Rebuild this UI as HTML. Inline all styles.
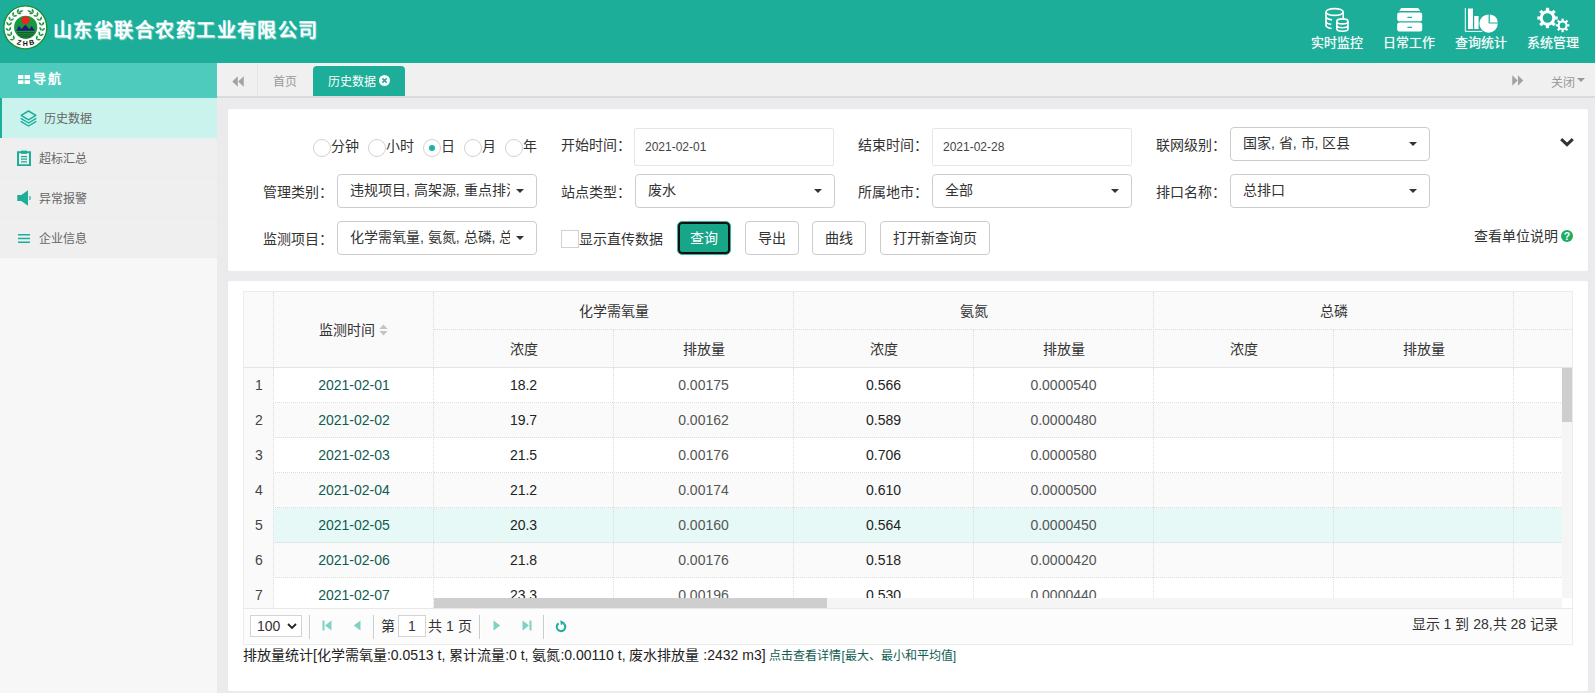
<!DOCTYPE html>
<html lang="zh-CN">
<head>
<meta charset="utf-8">
<title>历史数据</title>
<style>
*{box-sizing:border-box;margin:0;padding:0}
html,body{width:1595px;height:693px;overflow:hidden}
body{font-family:"Liberation Sans",sans-serif;font-size:14px;color:#333;background:#ebebed;position:relative}
.abs{position:absolute}
/* header */
#hdr{position:absolute;left:0;top:0;width:1595px;height:63px;background:#1cae99}
#title{position:absolute;left:53px;top:16px;height:30px;line-height:30px;font-family:"Liberation Serif",serif;font-weight:bold;font-size:19px;color:#fff;white-space:nowrap;letter-spacing:1.45px;text-shadow:1px 1px 1px rgba(255,255,255,.55)}
.topnav{position:absolute;top:0;height:63px;width:72px;color:#fff;text-align:center}
.topnav svg{position:absolute;left:0;top:0}
.topnav span{position:absolute;left:-10px;right:-10px;top:35px;height:16px;line-height:16px;font-size:13px;white-space:nowrap;text-shadow:0 0 1px rgba(255,255,255,.6)}
/* sidebar */
#side{position:absolute;left:0;top:63px;width:217px;height:630px;background:#f7f7f7}
#navh{position:absolute;left:0;top:0;width:217px;height:35px;background:#4ecbbc}
#navh span{position:absolute;left:33px;top:7px;line-height:18px;font-size:13px;font-weight:bold;color:#fff;letter-spacing:1.5px}
.mi{position:absolute;left:0;width:217px;height:40px;background:#efefef;border-bottom:1px solid #ebebeb;color:#666;font-size:12px}
.mi span{position:absolute;left:39px;top:13px;line-height:16px;white-space:nowrap}
.mi.act{background:#c9f3ec;border-left:2px solid #1cae99;border-bottom:none}
.mi.act span{left:42px}
/* tabs */
#tabs{position:absolute;left:217px;top:63px;width:1378px;height:35px;background:#f0f0f0;border-bottom:2px solid #dadada}
#tabs .t{position:absolute;top:0;height:33px;line-height:38px;font-size:12px;color:#999;white-space:nowrap}
#tabact{position:absolute;left:96px;top:3px;width:92px;height:30px;background:#1cae99;border-radius:4px 4px 0 0;color:#fff;font-size:12px;line-height:33px}
/* panels */
.panel{position:absolute;background:#fff;border-radius:2px}
.lbl{position:absolute;height:20px;line-height:20px;font-size:14px;color:#333;white-space:nowrap;text-align:right}
.sel{position:absolute;width:200px;height:34px;border:1px solid #ccc;border-radius:4px;background:#fff;font-size:14px;color:#333;line-height:31px;padding-left:12px;white-space:nowrap;overflow:hidden}
.sel i{position:absolute;right:12px;top:14px;width:0;height:0;border-left:4px solid transparent;border-right:4px solid transparent;border-top:4px solid #333}
.sel b{font-weight:normal;display:block;width:160px;overflow:hidden}
.dt{position:absolute;width:200px;height:38px;border:1px solid #e5e6e7;border-radius:2px;background:#fff;font-size:12px;color:#444;line-height:37px;padding-left:10px}
.btn{position:absolute;top:112px;height:34px;border:1px solid #ccc;border-radius:4px;background:#fff;font-size:14px;color:#333;line-height:32px;text-align:center;white-space:nowrap}
.rad{position:absolute;top:30px;width:18px;height:18px;border:1px solid #d2d2d2;border-radius:50%;background:#fff}
.rl{position:absolute;top:27px;height:20px;line-height:20px;font-size:14px;color:#333;white-space:nowrap}
/* table */
.cell{position:absolute;font-size:14px;color:#333;text-align:center;white-space:nowrap;overflow:hidden}
.hl{position:absolute;height:0;border-top:1px dotted #dcdcdc}
.vl{position:absolute;width:0;border-left:1px dotted #dcdcdc}
.row{position:absolute;left:0;width:1319px;height:35px}
.row span{position:absolute;top:0;height:35px;line-height:34px;text-align:center;font-size:14px;color:#333}
.row .n{left:0;width:30px;background:#fafafa;color:#444;text-align:center}
.row .d{left:30px;width:160px;color:#0f5c52}
.pg{position:absolute;font-size:14px;color:#333;line-height:20px;white-space:nowrap}
.sep{position:absolute;top:6px;width:0;height:24px;border-left:1px solid #ccc;border-right:1px solid #fff}
</style>
</head>
<body>
<div id="hdr">
<svg class="abs" style="left:2px;top:4px" width="48" height="48" viewBox="0 0 48 48">
<circle cx="23.3" cy="23.4" r="21.500" fill="#fff" stroke="#1d8f35" stroke-width="1.400"/>
<circle cx="23.7" cy="23.299999999999997" r="11.600" fill="#169a3e"/>
<circle cx="23.5" cy="16.299999999999997" r="4.100" fill="#e8281e"/>
<path d="M14.299999999999999 26.799999999999997 L17.0 21.799999999999997 L19.299999999999997 25.0 L23.4 20.799999999999997 L27.3 25.2 L29.7 22.0 L32.9 26.799999999999997 Z" fill="#2a157a"/>
<path d="M15.1 27.9h17.200v1.300h-17.200z M16.299999999999997 30.2h14.800v1.200h-14.800z M18.7 32.3h10v1.100h-10z" fill="#1b5a2a"/>
<g fill="#1e9440">
<path transform="translate(12.19 35.74) rotate(-176.0)" d="M0 0 Q2.30 -1.90 4.60 0 Q2.30 1.90 0 0Z"/>
<path transform="translate(12.19 35.74) rotate(-100.0)" d="M0 0 Q2.30 -1.90 4.60 0 Q2.30 1.90 0 0Z"/>
<path transform="translate(8.92 31.70) rotate(-158.0)" d="M0 0 Q2.30 -1.90 4.60 0 Q2.30 1.90 0 0Z"/>
<path transform="translate(8.92 31.70) rotate(-82.0)" d="M0 0 Q2.30 -1.90 4.60 0 Q2.30 1.90 0 0Z"/>
<path transform="translate(7.06 26.85) rotate(-140.0)" d="M0 0 Q2.30 -1.90 4.60 0 Q2.30 1.90 0 0Z"/>
<path transform="translate(7.06 26.85) rotate(-64.0)" d="M0 0 Q2.30 -1.90 4.60 0 Q2.30 1.90 0 0Z"/>
<path transform="translate(6.79 21.66) rotate(-122.0)" d="M0 0 Q2.30 -1.90 4.60 0 Q2.30 1.90 0 0Z"/>
<path transform="translate(6.79 21.66) rotate(-46.0)" d="M0 0 Q2.30 -1.90 4.60 0 Q2.30 1.90 0 0Z"/>
<path transform="translate(8.14 16.65) rotate(-104.0)" d="M0 0 Q2.30 -1.90 4.60 0 Q2.30 1.90 0 0Z"/>
<path transform="translate(8.14 16.65) rotate(-28.0)" d="M0 0 Q2.30 -1.90 4.60 0 Q2.30 1.90 0 0Z"/>
<path transform="translate(10.96 12.29) rotate(-86.0)" d="M0 0 Q2.30 -1.90 4.60 0 Q2.30 1.90 0 0Z"/>
<path transform="translate(10.96 12.29) rotate(-10.0)" d="M0 0 Q2.30 -1.90 4.60 0 Q2.30 1.90 0 0Z"/>
<path transform="translate(15.00 9.02) rotate(-68.0)" d="M0 0 Q2.30 -1.90 4.60 0 Q2.30 1.90 0 0Z"/>
<path transform="translate(15.00 9.02) rotate(8.0)" d="M0 0 Q2.30 -1.90 4.60 0 Q2.30 1.90 0 0Z"/>
<path transform="translate(16.55 8.24) rotate(-20.0)" d="M0 0 Q2.60 -1.80 5.20 0 Q2.60 1.80 0 0Z"/>
<path transform="translate(34.41 35.74) rotate(-4.0)" d="M0 0 Q2.30 -1.90 4.60 0 Q2.30 1.90 0 0Z"/>
<path transform="translate(34.41 35.74) rotate(-80.0)" d="M0 0 Q2.30 -1.90 4.60 0 Q2.30 1.90 0 0Z"/>
<path transform="translate(37.68 31.70) rotate(-22.0)" d="M0 0 Q2.30 -1.90 4.60 0 Q2.30 1.90 0 0Z"/>
<path transform="translate(37.68 31.70) rotate(-98.0)" d="M0 0 Q2.30 -1.90 4.60 0 Q2.30 1.90 0 0Z"/>
<path transform="translate(39.54 26.85) rotate(-40.0)" d="M0 0 Q2.30 -1.90 4.60 0 Q2.30 1.90 0 0Z"/>
<path transform="translate(39.54 26.85) rotate(-116.0)" d="M0 0 Q2.30 -1.90 4.60 0 Q2.30 1.90 0 0Z"/>
<path transform="translate(39.81 21.66) rotate(-58.0)" d="M0 0 Q2.30 -1.90 4.60 0 Q2.30 1.90 0 0Z"/>
<path transform="translate(39.81 21.66) rotate(-134.0)" d="M0 0 Q2.30 -1.90 4.60 0 Q2.30 1.90 0 0Z"/>
<path transform="translate(38.46 16.65) rotate(-76.0)" d="M0 0 Q2.30 -1.90 4.60 0 Q2.30 1.90 0 0Z"/>
<path transform="translate(38.46 16.65) rotate(-152.0)" d="M0 0 Q2.30 -1.90 4.60 0 Q2.30 1.90 0 0Z"/>
<path transform="translate(35.64 12.29) rotate(-94.0)" d="M0 0 Q2.30 -1.90 4.60 0 Q2.30 1.90 0 0Z"/>
<path transform="translate(35.64 12.29) rotate(-170.0)" d="M0 0 Q2.30 -1.90 4.60 0 Q2.30 1.90 0 0Z"/>
<path transform="translate(31.60 9.02) rotate(-112.0)" d="M0 0 Q2.30 -1.90 4.60 0 Q2.30 1.90 0 0Z"/>
<path transform="translate(31.60 9.02) rotate(-188.0)" d="M0 0 Q2.30 -1.90 4.60 0 Q2.30 1.90 0 0Z"/>
<path transform="translate(30.05 8.24) rotate(200.0)" d="M0 0 Q2.60 -1.80 5.20 0 Q2.60 1.80 0 0Z"/>
</g>
<text transform="translate(16.50 40.70) rotate(14)" font-size="7" font-weight="bold" fill="#111" text-anchor="middle" font-family="Liberation Sans">Z</text>
<text transform="translate(23.30 41.80) rotate(0)" font-size="7" font-weight="bold" fill="#111" text-anchor="middle" font-family="Liberation Sans">H</text>
<text transform="translate(30.10 40.70) rotate(-14)" font-size="7" font-weight="bold" fill="#111" text-anchor="middle" font-family="Liberation Sans">B</text>
</svg>

<div id="title">山东省联合农药工业有限公司</div>
<div class="topnav" style="left:1301px"><svg width="72" height="36" viewBox="0 0 72 36"><g fill="none" stroke="#fff" stroke-width="1.6">
<ellipse cx="33.600" cy="12" rx="8.600" ry="3.400"/><path d="M25 12v13.200c0 1.600 2.400 2.800 5.600 3.300M42.200 12v6M25 16.600c0 1.600 2.600 2.900 6 3.300M25 21.200c0 1.500 2.300 2.700 5.200 3.200"/>
<ellipse cx="41.400" cy="21.400" rx="5.600" ry="2.500"/><path d="M35.800 21.400v7.400c0 1.400 2.500 2.500 5.600 2.500s5.600-1.100 5.600-2.500v-7.400M35.800 25.200c0 1.400 2.500 2.500 5.600 2.500s5.600-1.100 5.600-2.500"/></g></svg><span>实时监控</span></div>
<div class="topnav" style="left:1373px"><svg width="72" height="36" viewBox="0 0 72 36"><path d="M28.200 8h17l2 3H26.200z M26.200 12.400h21q2 0 2 2v4.800q0 2-2 2H26.200q-2 0-2-2v-4.800q0-2 2-2z M26.200 22.600h21q2 0 2 2v4.800q0 2-2 2H26.200q-2 0-2-2v-4.800q0-2 2-2z" fill="#fff"/><path d="M34.900 17.400h3.600M34.900 27.400h3.600" stroke="#1cae99" stroke-width="1.200" stroke-linecap="round"/></svg><span>日常工作</span></div>
<div class="topnav" style="left:1445px"><svg width="72" height="36" viewBox="0 0 72 36"><path d="M20.300 8v23.400h17" fill="none" stroke="#fff" stroke-width="1"/><path d="M23 8.400h5v20.600h-5z M29.200 16h4.400v13h-4.400z" fill="#fff"/><path d="M43.600 14.400v9.200h9.200a9.200 9.200 0 1 1-9.200-9.200z" fill="#fff"/><path d="M44.800 14.400a8.200 8.200 0 0 1 8 8h-8z" fill="#fff"/></svg><span>查询统计</span></div>
<div class="topnav" style="left:1517px"><svg width="72" height="36" viewBox="0 0 72 36">
<g transform="translate(30.500 18)"><circle r="6.300" fill="none" stroke="#fff" stroke-width="3"/><g fill="#fff"><path transform="rotate(0)" d="M-1.600-10.200h3.200v3.400h-3.200z"/><path transform="rotate(45)" d="M-1.600-10.200h3.200v3.400h-3.200z"/><path transform="rotate(90)" d="M-1.600-10.200h3.200v3.400h-3.200z"/><path transform="rotate(135)" d="M-1.600-10.200h3.200v3.400h-3.200z"/><path transform="rotate(180)" d="M-1.600-10.200h3.200v3.400h-3.200z"/><path transform="rotate(225)" d="M-1.600-10.200h3.200v3.400h-3.200z"/><path transform="rotate(270)" d="M-1.600-10.200h3.200v3.400h-3.200z"/><path transform="rotate(315)" d="M-1.600-10.200h3.200v3.400h-3.200z"/></g></g>
<g transform="translate(45.600 25.400)"><circle r="3.900" fill="none" stroke="#fff" stroke-width="2"/><g fill="#fff"><path transform="rotate(0)" d="M-1.100-6.800h2.200v2.600h-2.200z"/><path transform="rotate(45)" d="M-1.100-6.800h2.200v2.600h-2.200z"/><path transform="rotate(90)" d="M-1.100-6.800h2.200v2.600h-2.200z"/><path transform="rotate(135)" d="M-1.100-6.800h2.200v2.600h-2.200z"/><path transform="rotate(180)" d="M-1.100-6.800h2.200v2.600h-2.200z"/><path transform="rotate(225)" d="M-1.100-6.800h2.200v2.600h-2.200z"/><path transform="rotate(270)" d="M-1.100-6.800h2.200v2.600h-2.200z"/><path transform="rotate(315)" d="M-1.100-6.800h2.200v2.600h-2.200z"/></g></g>
</svg><span>系统管理</span></div>

</div>
<div id="side">
<div id="navh"><svg class="abs" style="left:17.500px;top:11.500px" width="12" height="9.500" viewBox="0 0 12 10" preserveAspectRatio="none"><path d="M0 0h5.4v4.3H0z M6.6 0H12v4.3H6.6z M0 5.6h5.4V10H0z M6.6 5.6H12V10H6.6z" fill="#fff"/></svg><span>导航</span></div>
<div class="mi act" style="top:35px"><svg class="abs" style="left:18px;top:12px" width="17" height="17" viewBox="0 0 17 17"><path d="M8.5 1 L15.8 5.4 L8.5 9.8 L1.2 5.4 Z" fill="none" stroke="#1cae99" stroke-width="1.5" stroke-linejoin="round"/><path d="M1.2 8.6 L8.5 13 L15.8 8.6 M1.2 11.6 L8.5 16 L15.8 11.6" fill="none" stroke="#1cae99" stroke-width="1.4" stroke-linejoin="round" stroke-linecap="round"/></svg><span>历史数据</span></div>
<div class="mi" style="top:75px"><svg class="abs" style="left:17px;top:12px" width="14" height="16" viewBox="0 0 14 16"><path d="M1 2.2h12v13H1z" fill="none" stroke="#1cae99" stroke-width="2"/><path d="M4 0.6h6v3.2H4z" fill="#1cae99"/><path d="M4 6.6h6M4 9.2h6M4 11.8h6" stroke="#1cae99" stroke-width="1.3"/></svg><span>超标汇总</span></div>
<div class="mi" style="top:115px"><svg class="abs" style="left:17px;top:12px" width="15" height="16" viewBox="0 0 15 16"><path d="M0.3 5h4L11 0.3v15.4L4.3 11h-4z" fill="#1cae99"/><path d="M12.4 6.2a2.4 2.4 0 0 1 0 3.6" fill="none" stroke="#1cae99" stroke-width="1.2"/></svg><span>异常报警</span></div>
<div class="mi" style="top:155px"><svg class="abs" style="left:18px;top:16px" width="12" height="9" viewBox="0 0 12 9"><path d="M0 0.800h12M0 4.500h12M0 8.200h12" stroke="#1cae99" stroke-width="1.500"/></svg><span>企业信息</span></div>

</div>
<div id="tabs">
<svg class="abs" style="left:15px;top:13px" width="12" height="11" viewBox="0 0 13 11" preserveAspectRatio="none"><path d="M6.3 0.3v10.4L0.3 5.5z M12.7 0.3v10.4L6.7 5.5z" fill="#a2a2a2"/></svg>
<div class="abs" style="left:40px;top:0;width:1px;height:33px;background:#e6e6e6"></div>
<div class="t" style="left:56px">首页</div>
<div id="tabact"><span style="position:absolute;left:15px;top:0">历史数据</span><svg class="abs" style="left:66px;top:9px" width="11" height="11" viewBox="0 0 11 11"><circle cx="5.5" cy="5.5" r="5.5" fill="#fff"/><path d="M3.4 3.4l4.2 4.2M7.6 3.4L3.4 7.6" stroke="#1cae99" stroke-width="1.6"/></svg></div>
<svg class="abs" style="left:1295px;top:12px" width="11.500" height="11" viewBox="0 0 13 11" preserveAspectRatio="none"><path d="M0.3 0.3v10.4L6.3 5.5z M6.7 0.3v10.4L12.7 5.5z" fill="#a2a2a2"/></svg>
<div class="t" style="left:1334px;top:1px">关闭</div>
<div class="abs" style="left:1360px;top:15px;width:0;height:0;border-left:4px solid transparent;border-right:4px solid transparent;border-top:4px solid #999"></div>

</div>
<div class="panel" id="fp" style="left:228px;top:109px;width:1360px;height:162px">
<div class="rad" style="left:85px"></div><div class="rl" style="left:103px">分钟</div>
<div class="rad" style="left:140px"></div><div class="rl" style="left:158px">小时</div>
<div class="rad" style="left:195px"><div style="position:absolute;left:5px;top:5px;width:6px;height:6px;border-radius:50%;background:#1cb2a0"></div></div><div class="rl" style="left:213px">日</div>
<div class="rad" style="left:236px"></div><div class="rl" style="left:254px">月</div>
<div class="rad" style="left:277px"></div><div class="rl" style="left:295px">年</div>
<div class="lbl" style="left:333px;top:26px">开始时间：</div>
<div class="dt" style="left:406px;top:19px">2021-02-01</div>
<div class="lbl" style="left:630px;top:26px">结束时间：</div>
<div class="dt" style="left:704px;top:19px">2021-02-28</div>
<div class="lbl" style="left:928px;top:26px">联网级别：</div>
<div class="sel" style="left:1002px;top:18px"><b>国家, 省, 市, 区县</b><i></i></div>
<svg class="abs" style="left:1332px;top:28px" width="14" height="10" viewBox="0 0 14 10"><path d="M1.2 2.2 L7 7.6 L12.8 2.2" fill="none" stroke="#333" stroke-width="3"/></svg>
<div class="lbl" style="left:35px;top:73px">管理类别：</div>
<div class="sel" style="left:109px;top:65px"><b>违规项目, 高架源, 重点排污</b><i></i></div>
<div class="lbl" style="left:333px;top:73px">站点类型：</div>
<div class="sel" style="left:407px;top:65px"><b>废水</b><i></i></div>
<div class="lbl" style="left:630px;top:73px">所属地市：</div>
<div class="sel" style="left:704px;top:65px"><b>全部</b><i></i></div>
<div class="lbl" style="left:928px;top:73px">排口名称：</div>
<div class="sel" style="left:1002px;top:65px"><b>总排口</b><i></i></div>
<div class="lbl" style="left:35px;top:120px">监测项目：</div>
<div class="sel" style="left:109px;top:112px"><b>化学需氧量, 氨氮, 总磷, 总氮</b><i></i></div>
<div class="abs" style="left:333px;top:121px;width:18px;height:18px;border:1px solid #d2d2d2;background:#fff"></div>
<div class="lbl" style="left:351px;top:120px">显示直传数据</div>
<div class="btn" style="left:449px;width:54px;background:#18a689;color:#fff;border:1px solid #3bb39b;box-shadow:inset 0 0 0 2px #111;border-radius:5px">查询</div>
<div class="btn" style="left:517px;width:54px">导出</div>
<div class="btn" style="left:584px;width:54px">曲线</div>
<div class="btn" style="left:652px;width:110px">打开新查询页</div>
<div class="lbl" style="left:1246px;top:117px">查看单位说明</div>
<svg class="abs" style="left:1333px;top:121px" width="12" height="12" viewBox="0 0 12 12"><circle cx="6" cy="6" r="6" fill="#1cae60"/><text x="6" y="9.8" font-size="10.5" font-weight="bold" fill="#fff" text-anchor="middle" font-family="Liberation Sans">?</text></svg>

</div>
<div class="panel" id="tp" style="left:228px;top:281px;width:1360px;height:410px">
<div class="abs" id="tb" style="left:15px;top:10px;width:1330px;height:354px;border:1px solid #ececec;overflow:hidden">
<div class="abs" style="left:0;top:0;width:1328px;height:76px;background:#fafafa;border-bottom:1px solid #e4e4e4"></div>
<div class="cell" style="left:30px;top:0;width:159px;height:75px;line-height:77px">监测时间<svg width="9" height="12" viewBox="0 0 9 12" style="margin-left:4px;vertical-align:-1px"><path d="M0.3 5 L4.5 0.6 L8.7 5Z M0.3 7 L4.5 11.4 L8.7 7Z" fill="#c3c3c3"/></svg></div>
<div class="cell" style="left:190px;top:0px;width:359px;height:37px;line-height:39px;">化学需氧量</div>
<div class="cell" style="left:190px;top:38px;width:179px;height:37px;line-height:39px;">浓度</div>
<div class="cell" style="left:370px;top:38px;width:179px;height:37px;line-height:39px;">排放量</div>
<div class="cell" style="left:550px;top:0px;width:359px;height:37px;line-height:39px;">氨氮</div>
<div class="cell" style="left:550px;top:38px;width:179px;height:37px;line-height:39px;">浓度</div>
<div class="cell" style="left:730px;top:38px;width:179px;height:37px;line-height:39px;">排放量</div>
<div class="cell" style="left:910px;top:0px;width:359px;height:37px;line-height:39px;">总磷</div>
<div class="cell" style="left:910px;top:38px;width:179px;height:37px;line-height:39px;">浓度</div>
<div class="cell" style="left:1090px;top:38px;width:179px;height:37px;line-height:39px;">排放量</div>
<div class="hl" style="left:190px;top:37px;width:1138px"></div>
<div class="vl" style="left:29px;top:0px;height:76px"></div>
<div class="vl" style="left:189px;top:0px;height:76px"></div>
<div class="vl" style="left:369px;top:38px;height:38px"></div>
<div class="vl" style="left:549px;top:0px;height:76px"></div>
<div class="vl" style="left:729px;top:38px;height:38px"></div>
<div class="vl" style="left:909px;top:0px;height:76px"></div>
<div class="vl" style="left:1089px;top:38px;height:38px"></div>
<div class="vl" style="left:1269px;top:0px;height:76px"></div>
<div class="abs" style="left:0;top:76px;width:1318px;height:230px;overflow:hidden">
<div class="row" style="top:0px;background:#fff;border-bottom:1px dotted #dcdcdc">
<span style="left:190px;width:179px;color:#222">18.2</span>
<span style="left:370px;width:179px;color:#555">0.00175</span>
<span style="left:550px;width:179px;color:#222">0.566</span>
<span style="left:730px;width:179px;color:#555">0.0000540</span>
</div>
<div class="row" style="top:35px;background:#fafafa;border-bottom:1px dotted #dcdcdc">
<span style="left:190px;width:179px;color:#222">19.7</span>
<span style="left:370px;width:179px;color:#555">0.00162</span>
<span style="left:550px;width:179px;color:#222">0.589</span>
<span style="left:730px;width:179px;color:#555">0.0000480</span>
</div>
<div class="row" style="top:70px;background:#fff;border-bottom:1px dotted #dcdcdc">
<span style="left:190px;width:179px;color:#222">21.5</span>
<span style="left:370px;width:179px;color:#555">0.00176</span>
<span style="left:550px;width:179px;color:#222">0.706</span>
<span style="left:730px;width:179px;color:#555">0.0000580</span>
</div>
<div class="row" style="top:105px;background:#fafafa;border-bottom:1px dotted #dcdcdc">
<span style="left:190px;width:179px;color:#222">21.2</span>
<span style="left:370px;width:179px;color:#555">0.00174</span>
<span style="left:550px;width:179px;color:#222">0.610</span>
<span style="left:730px;width:179px;color:#555">0.0000500</span>
</div>
<div class="row" style="top:140px;background:#e7f9f6;border-bottom:1px dotted #dcdcdc">
<span style="left:190px;width:179px;color:#222">20.3</span>
<span style="left:370px;width:179px;color:#555">0.00160</span>
<span style="left:550px;width:179px;color:#222">0.564</span>
<span style="left:730px;width:179px;color:#555">0.0000450</span>
</div>
<div class="row" style="top:175px;background:#fafafa;border-bottom:1px dotted #dcdcdc">
<span style="left:190px;width:179px;color:#222">21.8</span>
<span style="left:370px;width:179px;color:#555">0.00176</span>
<span style="left:550px;width:179px;color:#222">0.518</span>
<span style="left:730px;width:179px;color:#555">0.0000420</span>
</div>
<div class="row" style="top:210px;background:#fff;border-bottom:1px dotted #dcdcdc">
<span style="left:190px;width:179px;color:#222">23.3</span>
<span style="left:370px;width:179px;color:#555">0.00196</span>
<span style="left:550px;width:179px;color:#222">0.530</span>
<span style="left:730px;width:179px;color:#555">0.0000440</span>
</div>
<div class="vl" style="left:189px;top:0;height:230px"></div>
<div class="vl" style="left:369px;top:0;height:230px"></div>
<div class="vl" style="left:549px;top:0;height:230px"></div>
<div class="vl" style="left:729px;top:0;height:230px"></div>
<div class="vl" style="left:909px;top:0;height:230px"></div>
<div class="vl" style="left:1089px;top:0;height:230px"></div>
<div class="vl" style="left:1269px;top:0;height:230px"></div>
</div>
<div class="abs" style="left:0;top:76px;width:190px;height:240px;overflow:hidden;background:#fff">
<div class="row" style="top:0px;width:190px;background:#fff;border-bottom:1px dotted #dcdcdc"><span class="n">1</span><span class="d">2021-02-01</span></div>
<div class="row" style="top:35px;width:190px;background:#fafafa;border-bottom:1px dotted #dcdcdc"><span class="n">2</span><span class="d">2021-02-02</span></div>
<div class="row" style="top:70px;width:190px;background:#fff;border-bottom:1px dotted #dcdcdc"><span class="n">3</span><span class="d">2021-02-03</span></div>
<div class="row" style="top:105px;width:190px;background:#fafafa;border-bottom:1px dotted #dcdcdc"><span class="n">4</span><span class="d">2021-02-04</span></div>
<div class="row" style="top:140px;width:190px;background:#e7f9f6;border-bottom:1px dotted #dcdcdc"><span class="n">5</span><span class="d">2021-02-05</span></div>
<div class="row" style="top:175px;width:190px;background:#fafafa;border-bottom:1px dotted #dcdcdc"><span class="n">6</span><span class="d">2021-02-06</span></div>
<div class="row" style="top:210px;width:190px;background:#fff;border-bottom:1px dotted #dcdcdc"><span class="n">7</span><span class="d">2021-02-07</span></div>
<div class="vl" style="left:29px;top:0;height:240px"></div>
<div class="vl" style="left:189px;top:0;height:240px"></div>
</div>
<div class="abs" style="left:1318px;top:76px;width:10px;height:230px;background:#f5f5f5"><div class="abs" style="left:0;top:0;width:10px;height:54px;background:#cececf"></div></div>
<div class="abs" style="left:190px;top:306px;width:1128px;height:10px;background:#f5f5f5"><div class="abs" style="left:0;top:0;width:393px;height:10px;background:#cececf"></div></div>
<div class="abs" id="pager" style="left:0;top:316px;width:1328px;height:36px;background:#fcfcfc;border-top:1px solid #e8e8e8">
<div class="abs" style="left:6px;top:6px;width:52px;height:22px;border:1px solid #d4d4d4;background:#fff;font-size:14px;line-height:20px;padding-left:6px;color:#333">100<svg class="abs" style="left:36px;top:7px" width="10" height="7" viewBox="0 0 10 7"><path d="M1 1 L5 5 L9 1" fill="none" stroke="#222" stroke-width="1.8"/></svg></div>
<div class="sep" style="left:65px"></div>
<div class="sep" style="left:129px"></div>
<div class="sep" style="left:235px"></div>
<div class="sep" style="left:299px"></div>
<svg class="abs" style="left:78px;top:11px" width="10" height="11" viewBox="0 0 10 11"><path d="M0.5 0.5h2v10h-2z M9.5 0.5v10L3 5.5z" fill="#7fd1c5"/></svg>
<svg class="abs" style="left:109px;top:11px" width="8" height="11" viewBox="0 0 8 11"><path d="M7.5 0.5v10L0.8 5.5z" fill="#7fd1c5"/></svg>
<div class="pg" style="left:137px;top:7px">第</div>
<div class="abs" style="left:154px;top:6px;width:28px;height:22px;border:1px solid #d4d4d4;background:#fff;font-size:14px;line-height:20px;text-align:center;color:#333">1</div>
<div class="pg" style="left:184px;top:7px">共 1 页</div>
<svg class="abs" style="left:249px;top:11px" width="8" height="11" viewBox="0 0 8 11"><path d="M0.5 0.5v10L7.2 5.5z" fill="#7fd1c5"/></svg>
<svg class="abs" style="left:278px;top:11px" width="10" height="11" viewBox="0 0 10 11"><path d="M7.5 0.5h2v10h-2z M0.5 0.5v10L7 5.5z" fill="#7fd1c5"/></svg>
<svg class="abs" style="left:311px;top:11px" width="12" height="13" viewBox="0 0 12 13"><path d="M8.6 3.4 A4.3 4.3 0 1 1 3.6 3.3" fill="none" stroke="#1cae99" stroke-width="2"/><path d="M5.2 0.2 L9.6 2.4 L6 5.2z" fill="#1cae99"/></svg>
<div class="pg" style="right:14px;top:5px">显示 1 到 28,共 28 记录</div>
</div>
</div>
<div class="abs" style="left:15px;top:364px;height:20px;line-height:20px;font-size:14px;color:#222;white-space:nowrap">排放量统计[化学需氧量:0.0513 t, 累计流量:0 t, 氨氮:0.00110 t, 废水排放量 :2432 m3] <span style="font-size:12px;color:#0f5c52">点击查看详情[最大、最小和平均值]</span></div>

</div>
</body>
</html>
